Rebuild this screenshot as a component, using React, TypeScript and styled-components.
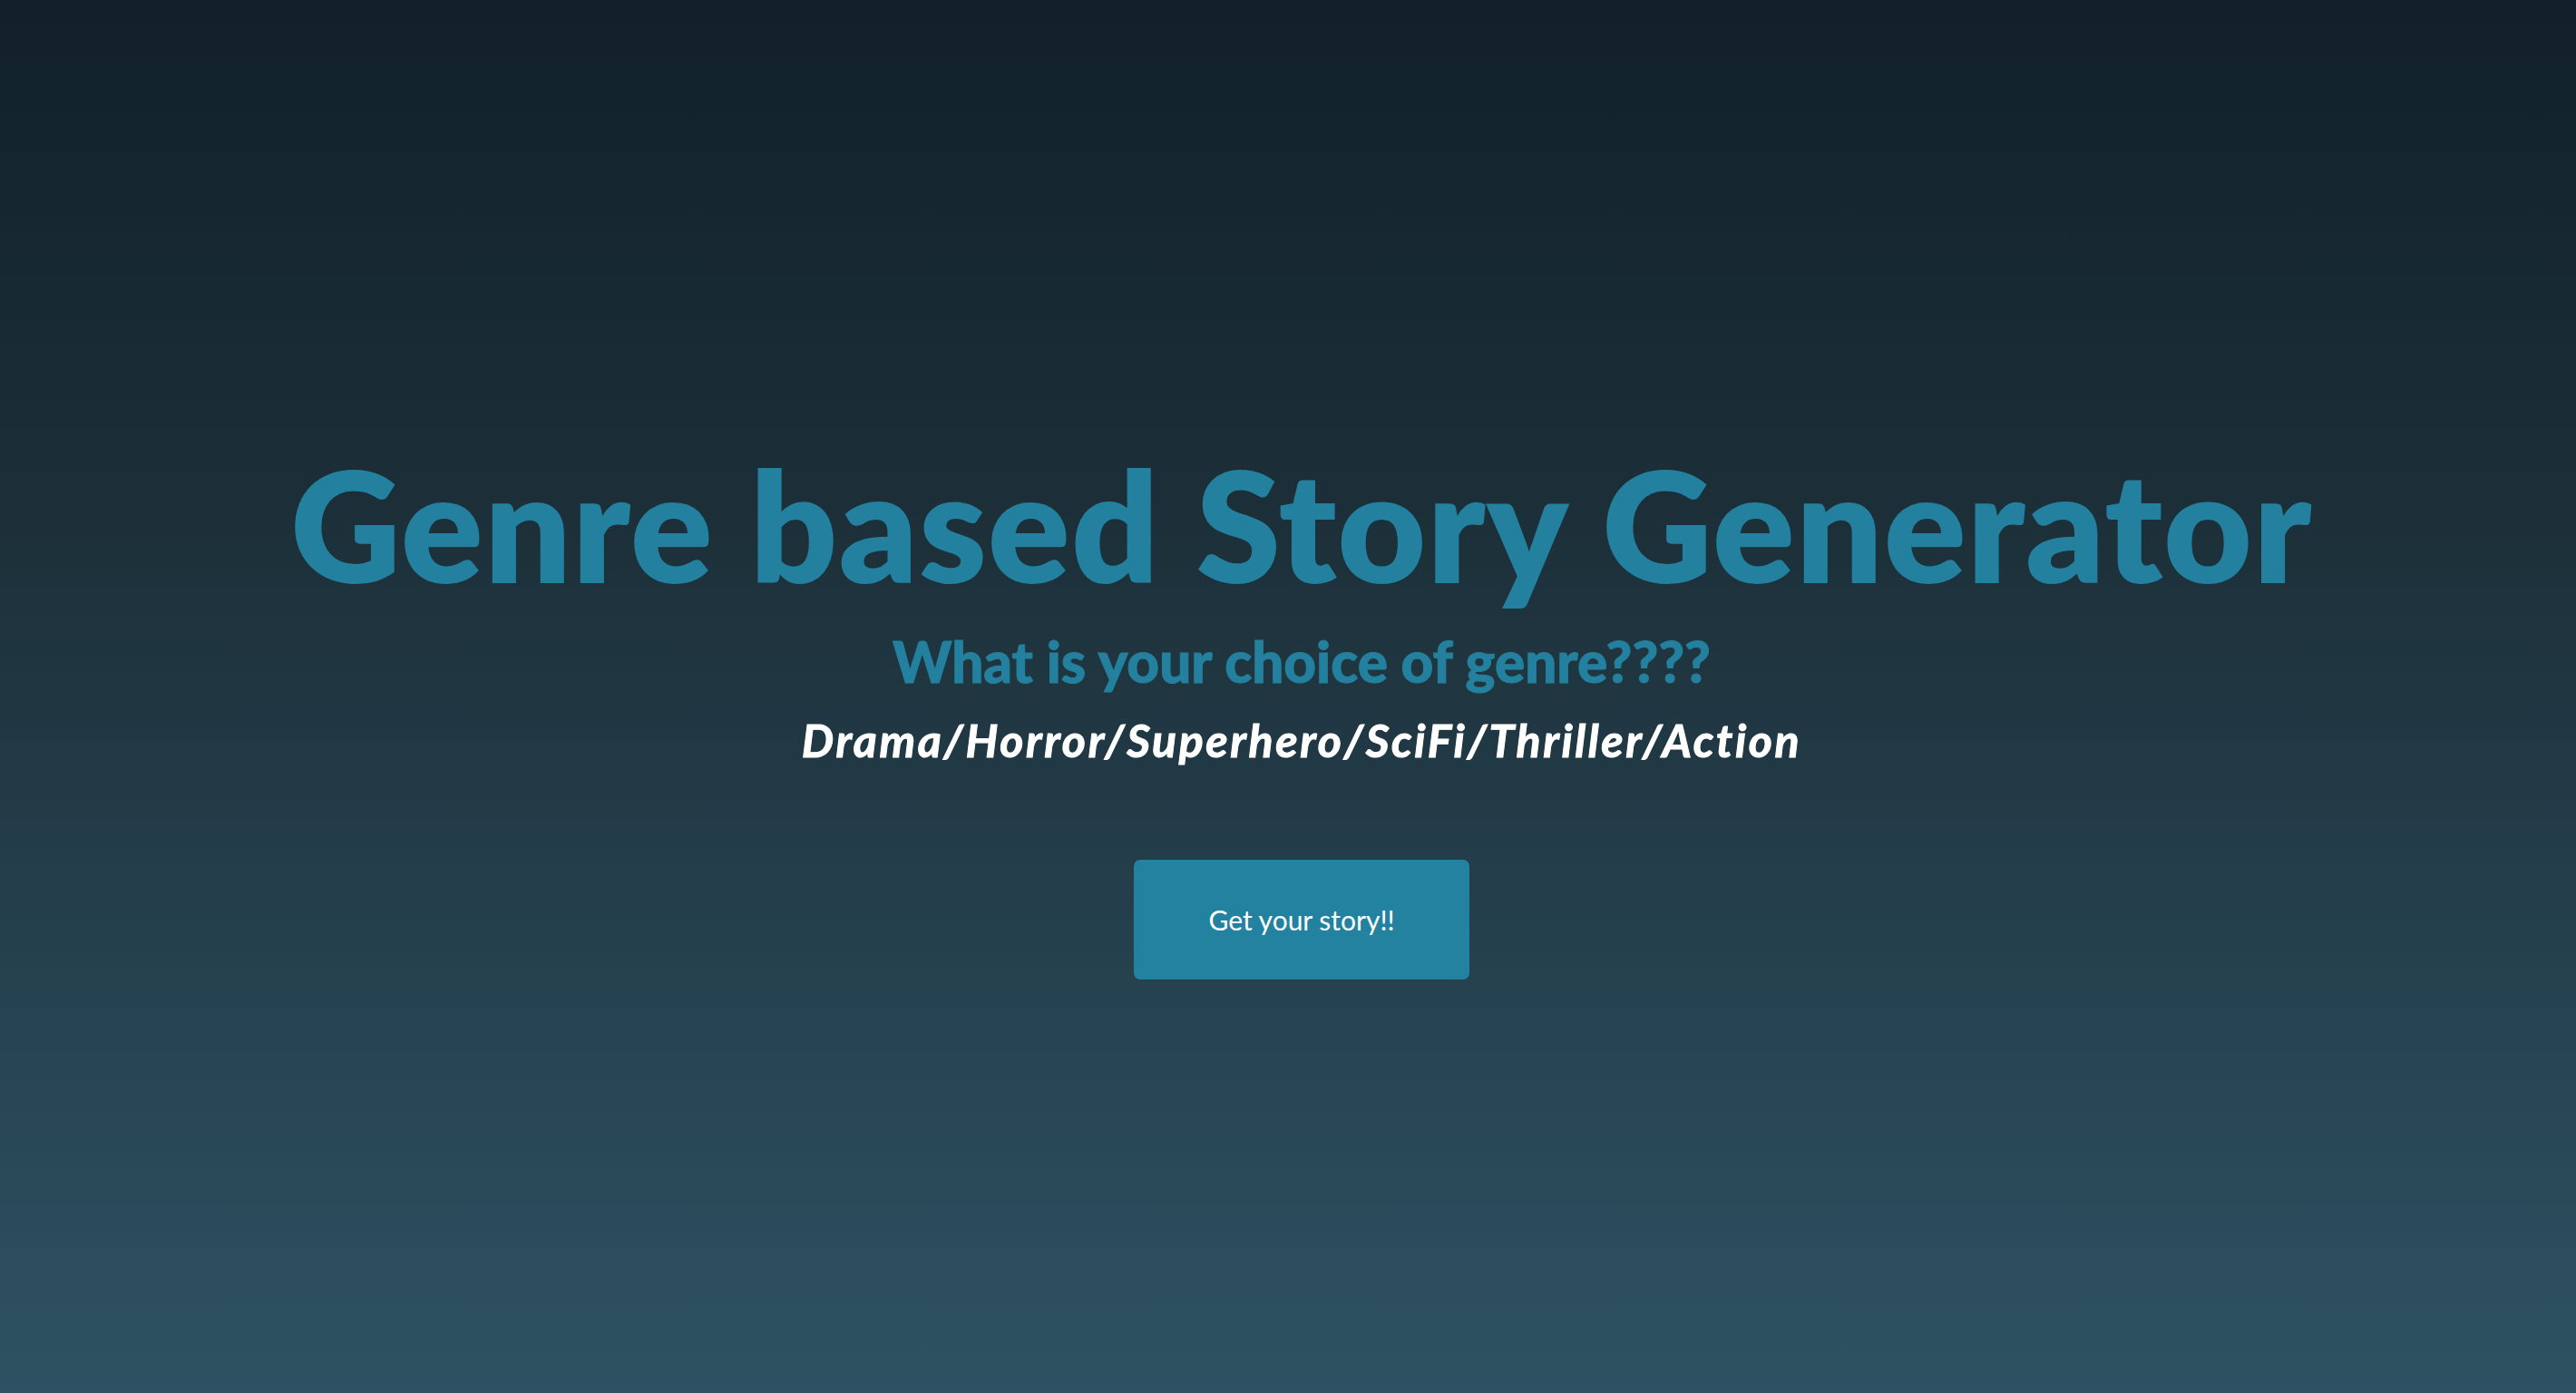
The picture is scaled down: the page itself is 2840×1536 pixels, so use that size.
import React from "react";
import styled, { createGlobalStyle } from "styled-components";

const GlobalStyle = createGlobalStyle`
  html, body {
    margin: 0;
    padding: 0;
  }
  body {
    font-family: Lato, "Open Sans", sans-serif;
  }
`;

const Page = styled.main`
  min-height: 100vh;
  box-sizing: border-box;
  display: flex;
  flex-direction: column;
  align-items: center;
  justify-content: center;
  padding: 52px 0 22px 30px;
  background: linear-gradient(180deg, #11202a 0%, #1d313b 40%, #2e5263 100%);
  text-align: center;
`;

const Title = styled.h1`
  margin: 0;
  font-size: 168px;
  font-weight: 800;
  line-height: 1.1;
  letter-spacing: 1.3px;
  color: #23809e;
`;

const Question = styled.h2`
  margin: 21px 0 0;
  font-size: 62px;
  font-weight: 900;
  line-height: 1.2;
  letter-spacing: 0;
  color: #23809e;
  -webkit-text-stroke: 1px #23809e;
`;

const Genres = styled.p`
  margin: 20px 0 0;
  font-size: 50px;
  font-weight: 700;
  font-style: italic;
  line-height: 1.2;
  letter-spacing: 2.6px;
  color: #ffffff;
  -webkit-text-stroke: 1px #ffffff;
`;

const Action = styled.button`
  margin-top: 102px;
  width: 370px;
  height: 132px;
  border: none;
  border-radius: 7px;
  background: #23829f;
  color: #ffffff;
  font-family: inherit;
  font-size: 30px;
  cursor: pointer;
`;

export default function App() {
  return (
    <>
      <GlobalStyle />
      <Page>
        <Title>Genre based Story Generator</Title>
        <Question>What is your choice of genre????</Question>
        <Genres>Drama/Horror/Superhero/SciFi/Thriller/Action</Genres>
        <Action>Get your story!!</Action>
      </Page>
    </>
  );
}
